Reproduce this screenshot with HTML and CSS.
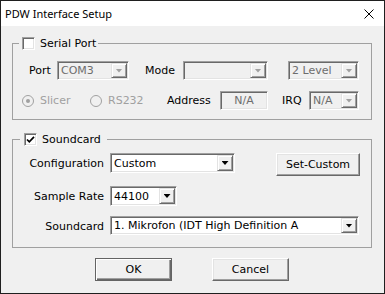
FILE: index.html
```html
<!DOCTYPE html>
<html lang="en">
<head>
    <meta charset="UTF-8">
    <title>PDW Interface Setup</title>
    <link rel="stylesheet" href="styles.css">
</head>
<body>
    <div class="window">
        <div class="titlebar">
            <span class="title">PDW Interface Setup</span>
            <svg class="close" width="10" height="10" viewBox="0 0 10 10">
                <path d="M0.5 0.5L9.5 9.5M9.5 0.5L0.5 9.5" stroke="#000" stroke-width="1" fill="none"/>
            </svg>
        </div>

        <div class="client">
            <fieldset class="group serial">
                <legend class="group-title">
                    <span class="check"></span>
                    <span>Serial Port</span>
                </legend>

                <div class="row row-port">
                    <span class="lbl lbl-port">Port</span>
                    <div class="combo disabled combo-port">
                        <span class="value">COM3</span>
                        <span class="drop"></span>
                    </div>
                    <span class="lbl lbl-mode">Mode</span>
                    <div class="combo disabled combo-mode">
                        <span class="value"></span>
                        <span class="drop"></span>
                    </div>
                    <div class="combo disabled combo-level">
                        <span class="value">2 Level</span>
                        <span class="drop"></span>
                    </div>
                </div>

                <div class="row row-line">
                    <span class="radio radio-slicer">
                        <svg width="12" height="12" viewBox="0 0 12 12">
                            <circle cx="6" cy="6" r="5.5" fill="#f0f0f0" stroke="#a0a0a0"/>
                            <circle cx="6" cy="6" r="2" fill="#a0a0a0"/>
                        </svg>
                        Slicer
                    </span>
                    <span class="radio radio-rs232">
                        <svg width="12" height="12" viewBox="0 0 12 12">
                            <circle cx="6" cy="6" r="5.5" fill="#f0f0f0" stroke="#a0a0a0"/>
                        </svg>
                        RS232
                    </span>
                    <span class="lbl lbl-address">Address</span>
                    <div class="edit disabled edit-address">N/A</div>
                    <span class="lbl lbl-irq">IRQ</span>
                    <div class="combo disabled combo-irq">
                        <span class="value">N/A</span>
                        <span class="drop"></span>
                    </div>
                </div>
            </fieldset>

            <fieldset class="group sound">
                <legend class="group-title">
                    <span class="check checked">
                        <svg width="9" height="9" viewBox="0 0 9 9">
                            <path d="M1 4.5L3.3 6.8L8 1.8" stroke="#000" stroke-width="1.7" fill="none"/>
                        </svg>
                    </span>
                    <span>Soundcard</span>
                </legend>

                <div class="sound-grid">
                    <span class="glbl">Configuration</span>
                    <div class="config-line">
                        <div class="combo combo-config">
                            <span class="value">Custom</span>
                            <span class="drop"></span>
                        </div>
                        <button class="btn btn-set">Set-Custom</button>
                    </div>

                    <span class="glbl">Sample Rate</span>
                    <div class="combo combo-rate">
                        <span class="value">44100</span>
                        <span class="drop"></span>
                    </div>

                    <span class="glbl">Soundcard</span>
                    <div class="combo combo-card">
                        <span class="value">1. Mikrofon (IDT High Definition A</span>
                        <span class="drop"></span>
                    </div>
                </div>
            </fieldset>

            <div class="actions">
                <button class="btn btn-default">OK</button>
                <button class="btn">Cancel</button>
            </div>
        </div>
    </div>
</body>
</html>
```

FILE: styles.css
```css
* {
    box-sizing: border-box;
}

body {
    margin: 0;
    background: #fff;
    font-family: "DejaVu Sans", sans-serif;
    font-size: 11px;
    color: #000;
}

.window {
    width: 385px;
    height: 294px;
    border: 1px solid #1f1f1f;
    background: #f0f0f0;
    display: flex;
    flex-direction: column;
}

.titlebar {
    height: 25px;
    flex: none;
    background: #fff;
    display: flex;
    align-items: center;
    justify-content: space-between;
    padding: 0 10px 0 4px;
}

.title {
    font-family: "Noto Sans", sans-serif;
    font-size: 11px;
}

.client {
    flex: 1;
    padding: 10px 12px 0 11px;
}

/* group boxes */
.group {
    margin: 0;
    padding: 0;
    min-width: 0;
    border: 1px solid #a0a0a0;
}

.group-title {
    display: flex;
    align-items: center;
    gap: 5px;
    height: 14px;
    margin-left: 6px;
    padding: 0 2px 0 3px;
}

.sound {
    margin-top: 12px;
}

.sound .group-title {
    margin-left: 7px;
    padding: 0 6px 0 4px;
}

.check {
    width: 13px;
    height: 13px;
    background: #fff;
    border: 1px solid;
    border-color: #a0a0a0 #fff #fff #a0a0a0;
    box-shadow: inset 1px 1px #696969, inset -1px -1px #e3e3e3;
    display: flex;
    align-items: center;
    justify-content: center;
}

/* serial port rows */
.row {
    display: flex;
    align-items: center;
    height: 19px;
    margin-top: 11px;
}

.row-port {
    padding-left: 16px;
}

.row-line {
    padding-left: 9px;
    margin-bottom: 9px;
}

.lbl-port { width: 28px; }
.lbl-mode { width: 38px; margin-left: 16px; }
.lbl-address { width: 53px; }
.lbl-irq { width: 27px; margin-left: 14px; }

.radio {
    display: flex;
    align-items: center;
    gap: 6px;
    color: #a0a0a0;
}

.radio-slicer { width: 68px; }
.radio-rs232 { width: 77px; }

/* combo boxes and edits */
.combo,
.edit {
    height: 19px;
    display: flex;
    align-items: center;
    padding: 1px;
    background: #fff;
    border: 1px solid;
    border-color: #a0a0a0 #fff #fff #a0a0a0;
    box-shadow: inset 1px 1px #696969, inset -1px -1px #e3e3e3;
}

.combo .value {
    flex: 1;
    padding-left: 2px;
    white-space: nowrap;
    overflow: hidden;
}

.drop {
    width: 16px;
    align-self: stretch;
    background: #f0f0f0;
    border: 1px solid;
    border-color: #e3e3e3 #696969 #696969 #e3e3e3;
    box-shadow: inset 1px 1px #fff, inset -1px -1px #a0a0a0;
    display: flex;
    align-items: center;
    justify-content: center;
}

.drop::after {
    content: "";
    width: 7px;
    height: 4px;
    background: #000;
    clip-path: polygon(0 0, 100% 0, 50% 100%);
}

.disabled {
    background: #f0f0f0;
    color: #6d6d6d;
}

.disabled .drop::after {
    background: #a0a0a0;
}

.edit {
    justify-content: center;
}

.combo-port { width: 72px; }
.combo-mode { width: 85px; }
.combo-level { width: 71px; margin-left: 20px; }
.combo-irq { width: 50px; }
.edit-address { width: 48px; }

/* soundcard grid */
.sound-grid {
    display: grid;
    grid-template-columns: 91px auto;
    grid-template-rows: 23px 20px 19px;
    column-gap: 6px;
    row-gap: 10px;
    margin: 7px 0 12px;
}

.glbl {
    height: 20px;
    display: flex;
    align-items: center;
    justify-content: flex-end;
}

.config-line {
    display: flex;
    align-items: flex-start;
}

.sound-grid .combo {
    height: 20px;
}

.sound-grid .combo-card {
    height: 19px;
}

.combo-config { width: 125px; }
.combo-rate { width: 67px; }
.combo-card { width: 249px; }

/* buttons */
.btn {
    width: 77px;
    height: 23px;
    padding: 0;
    font: inherit;
    color: #000;
    background: #f0f0f0;
    border: 1px solid;
    border-color: #fff #696969 #696969 #fff;
    box-shadow: inset -1px -1px #a0a0a0, inset 1px 1px #e3e3e3;
}

.btn-set {
    width: 84px;
    margin-left: 41px;
}

.btn-default {
    border-color: #646464;
    box-shadow: inset 1px 1px #fff, inset -1px -1px #696969, inset -2px -2px #a0a0a0;
}

.actions {
    display: flex;
    justify-content: center;
    gap: 40px;
    margin-top: 10px;
}
```
